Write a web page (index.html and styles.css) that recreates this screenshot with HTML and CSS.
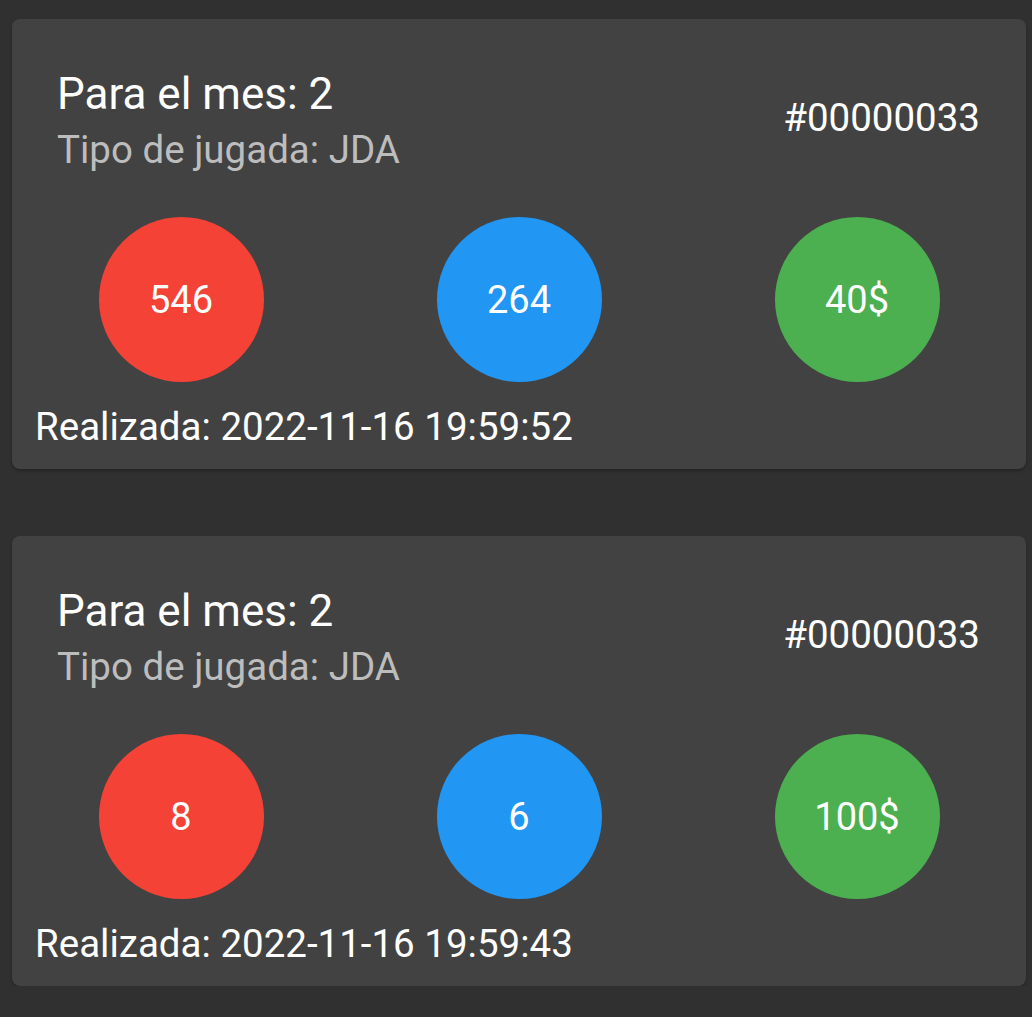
FILE: index.html
```html
<!DOCTYPE html>
<html lang="es">
<head>
<meta charset="utf-8">
<title>Jugadas</title>
<link rel="stylesheet" href="styles.css">
</head>
<body>
<main class="list">
  <section class="card">
    <div class="head">
      <div class="head-text">
        <div class="title">Para el mes: 2</div>
        <div class="subtitle">Tipo de jugada: JDA</div>
      </div>
      <div class="code">#00000033</div>
    </div>
    <div class="balls">
      <div class="slot"><div class="ball red">546</div></div>
      <div class="slot"><div class="ball blue">264</div></div>
      <div class="slot"><div class="ball green">40$</div></div>
    </div>
    <div class="date">Realizada: 2022-11-16 19:59:52</div>
  </section>
  <section class="card">
    <div class="head">
      <div class="head-text">
        <div class="title">Para el mes: 2</div>
        <div class="subtitle">Tipo de jugada: JDA</div>
      </div>
      <div class="code">#00000033</div>
    </div>
    <div class="balls">
      <div class="slot"><div class="ball red">8</div></div>
      <div class="slot"><div class="ball blue">6</div></div>
      <div class="slot"><div class="ball green">100$</div></div>
    </div>
    <div class="date">Realizada: 2022-11-16 19:59:43</div>
  </section>
</main>
</body>
</html>
```
FILE: styles.css
```css
html, body {
  margin: 0;
  padding: 0;
  background: #303030;
  font-family: Roboto, "Noto Sans", sans-serif;
  color: #ffffff;
}
.list {
  display: flex;
  flex-direction: column;
  gap: 67px;
  padding: 19px 6px 0 12px;
}
.card {
  background: #424242;
  border-radius: 8px;
  height: 450px;
  box-sizing: border-box;
  box-shadow: 0 2px 3px rgba(0,0,0,0.25);
  display: flex;
  flex-direction: column;
}
.head {
  display: flex;
  align-items: center;
  justify-content: space-between;
  padding: 48px 46px 0 45px;
}
.title {
  font-size: 44px;
  line-height: 54px;
}
.subtitle {
  font-size: 38.5px;
  line-height: 58px;
  color: #bdbdbd;
}
.code {
  font-size: 38.5px;
  line-height: 44px;
  margin-bottom: 10px;
}
.balls {
  display: flex;
  margin-top: 38px;
}
.slot {
  flex: 1;
  display: flex;
  justify-content: center;
}
.ball {
  width: 165px;
  height: 165px;
  border-radius: 50%;
  display: flex;
  align-items: center;
  justify-content: center;
  font-size: 38px;
}
.red { background: #f44336; }
.blue { background: #2196f3; }
.green { background: #4caf50; }
.date {
  font-size: 38.5px;
  line-height: 48px;
  padding: 21px 0 0 23px;
}
```
